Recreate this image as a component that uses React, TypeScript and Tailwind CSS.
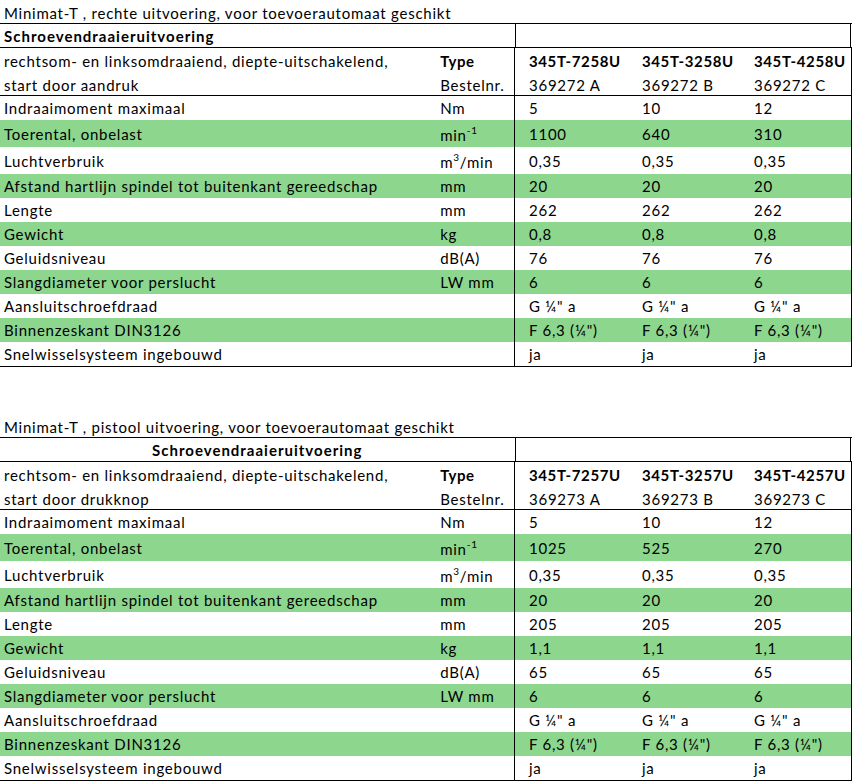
import React from 'react'

type Row = {
  label: string
  unit: React.ReactNode
  values: string[]
  green?: boolean
  tall?: boolean
}

const minUnit = (
  <span>
    min<sup className="relative -top-[7px] text-[10px]">-1</sup>
  </span>
)

const m3Unit = (
  <span>
    m<sup className="relative -top-[7px] text-[10px]">3</sup>/min
  </span>
)

function rows(vals: {
  nm: string[]
  rpm: string[]
  length: string[]
  weight: string[]
  noise: string[]
}): Row[] {
  return [
    { label: 'Indraaimoment maximaal', unit: 'Nm', values: vals.nm },
    { label: 'Toerental, onbelast', unit: minUnit, values: vals.rpm, green: true, tall: true },
    { label: 'Luchtverbruik', unit: m3Unit, values: ['0,35', '0,35', '0,35'], tall: true },
    { label: 'Afstand hartlijn spindel tot buitenkant gereedschap', unit: 'mm', values: ['20', '20', '20'], green: true },
    { label: 'Lengte', unit: 'mm', values: vals.length },
    { label: 'Gewicht', unit: 'kg', values: vals.weight, green: true },
    { label: 'Geluidsniveau', unit: 'dB(A)', values: vals.noise },
    { label: 'Slangdiameter voor perslucht', unit: 'LW mm', values: ['6', '6', '6'], green: true },
    { label: 'Aansluitschroefdraad', unit: '', values: ['G ¼" a', 'G ¼" a', 'G ¼" a'] },
    { label: 'Binnenzeskant DIN3126', unit: '', values: ['F 6,3 (¼")', 'F 6,3 (¼")', 'F 6,3 (¼")'], green: true },
    { label: 'Snelwisselsysteem ingebouwd', unit: '', values: ['ja', 'ja', 'ja'] },
  ]
}

const valueCols = ['w-[113px] pl-[14px]', 'w-[113px] pl-[14px]', 'w-[110px] pl-[13px]']

function SpecTable({
  title,
  centerHeader,
  start,
  types,
  orders,
  data,
}: {
  title: string
  centerHeader?: boolean
  start: string
  types: string[]
  orders: string[]
  data: Row[]
}) {
  return (
    <div className="w-[852px]">
      <div className="flex h-[24px] items-center border-b border-black pl-[4px] pt-[3px]">{title}</div>

      <div className="flex h-[24px] border-b border-black">
        <div
          className={`flex w-[515px] items-center pt-[2px] font-bold tracking-[1px] ${centerHeader ? 'pl-[152px]' : 'pl-[4px]'}`}
        >
          Schroevendraaieruitvoering
        </div>
        <div className="w-[336px] border-x border-black" />
      </div>

      <div className="flex h-[48px] border-b border-black pt-[1px]">
        <div className="flex w-[441px] flex-col pl-[4px] leading-[24px]">
          <span>rechtsom- en linksomdraaiend, diepte-uitschakelend,</span>
          <span>{start}</span>
        </div>
        <div className="flex w-[74px] flex-col leading-[24px]">
          <span className="font-bold tracking-[0.6px]">Type</span>
          <span>Bestelnr.</span>
        </div>
        <div className="-mt-[1px] flex border-x border-black pt-[1px]">
          {types.map((t, i) => (
            <div key={t} className={`flex flex-col leading-[24px] ${valueCols[i]}`}>
              <span className="font-bold tracking-[0.6px]">{t}</span>
              <span>{orders[i]}</span>
            </div>
          ))}
        </div>
      </div>

      <div className="border-b border-black">
        {data.map((r) => (
          <div
            key={r.label}
            className={`flex ${r.tall ? 'h-[27px]' : 'h-[24px]'} ${r.green ? 'bg-[#8dd68e]' : 'bg-white'}`}
          >
            <div className="flex w-[441px] items-center pl-[4px] pt-[1px]">{r.label}</div>
            <div className={`flex w-[74px] items-center ${r.tall ? 'pt-[4px]' : 'pt-[1px]'}`}>{r.unit}</div>
            <div className="flex border-x border-black">
              {r.values.map((v, i) => (
                <div key={i} className={`flex items-center pt-[1px] ${valueCols[i]}`}>
                  {v}
                </div>
              ))}
            </div>
          </div>
        ))}
      </div>
    </div>
  )
}

export default function App() {
  return (
    <main className="min-h-screen w-[852px] bg-white text-[15px] tracking-[0.75px] text-black [font-family:Lato,'Liberation_Sans',sans-serif]">
      <SpecTable
        title="Minimat-T , rechte uitvoering, voor toevoerautomaat geschikt"
        start="start door aandruk"
        types={['345T-7258U', '345T-3258U', '345T-4258U']}
        orders={['369272 A', '369272 B', '369272 C']}
        data={rows({
          nm: ['5', '10', '12'],
          rpm: ['1100', '640', '310'],
          length: ['262', '262', '262'],
          weight: ['0,8', '0,8', '0,8'],
          noise: ['76', '76', '76'],
        })}
      />

      <div className="h-[47px]" />

      <SpecTable
        title="Minimat-T , pistool uitvoering, voor toevoerautomaat geschikt"
        centerHeader
        start="start door drukknop"
        types={['345T-7257U', '345T-3257U', '345T-4257U']}
        orders={['369273 A', '369273 B', '369273 C']}
        data={rows({
          nm: ['5', '10', '12'],
          rpm: ['1025', '525', '270'],
          length: ['205', '205', '205'],
          weight: ['1,1', '1,1', '1,1'],
          noise: ['65', '65', '65'],
        })}
      />
    </main>
  )
}
